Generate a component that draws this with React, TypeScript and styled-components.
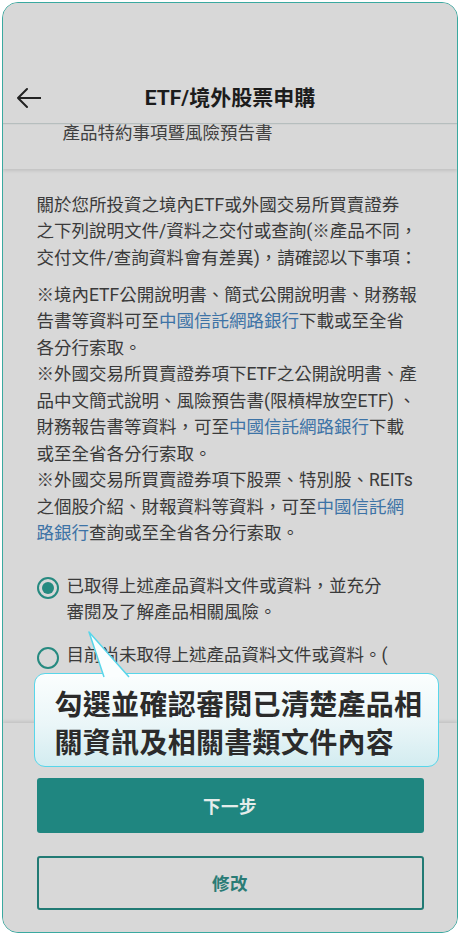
import React from 'react';
import styled, { createGlobalStyle } from 'styled-components';

const GlobalStyle = createGlobalStyle`
  html, body {
    margin: 0;
    padding: 0;
    background: #ffffff;
  }
  body {
    font-family: Roboto, "Noto Sans CJK TC", "Noto Sans", sans-serif;
  }
`;

const Page = styled.div`
  padding: 2px;
  width: 460px;
  box-sizing: border-box;
`;

const Frame = styled.div`
  position: relative;
  width: 456px;
  height: 931px;
  box-sizing: border-box;
  border: 1.5px solid #3aa9a0;
  border-radius: 16px;
  background: #d8d8d8;
  overflow: hidden;
  display: flex;
  flex-direction: column;
`;

const Header = styled.header`
  position: relative;
  z-index: 2;
  height: 120px;
  box-sizing: border-box;
  padding-top: 70px;
  background: #d8d8d8;
  box-shadow: 0 1px 1px rgba(80, 110, 110, 0.25);
`;

const TitleBar = styled.div`
  position: relative;
  height: 50px;
  display: flex;
  align-items: center;
  justify-content: center;
`;

const BackButton = styled.button`
  position: absolute;
  left: 10px;
  top: 50%;
  transform: translateY(-50%);
  border: 0;
  padding: 0;
  background: none;
  display: flex;
`;

const Title = styled.h1`
  margin: 0;
  font-size: 21px;
  font-weight: 700;
  color: #1c1c1c;
  line-height: 28px;
`;

const SubBar = styled.div`
  position: relative;
  z-index: 1;
  height: 45.5px;
  box-sizing: border-box;
  padding-left: 59.5px;
  font-size: 17.5px;
  line-height: 20px;
  color: #404040;
  background: #d8d8d8;
  box-shadow: 0 2px 3px rgba(0, 0, 0, 0.1);
`;

const Content = styled.main`
  flex: 1;
  overflow: hidden;
  padding: 23px 0 0 33.5px;
  color: #3a3a3a;
  font-size: 17.5px;
  line-height: 26.5px;
  white-space: nowrap;
`;

const Paragraph = styled.p<{ $gap?: number }>`
  margin: 0 0 ${(p) => p.$gap ?? 0}px;
`;

const Link = styled.span`
  color: #3d73a6;
`;

const Options = styled.div`
  display: flex;
  flex-direction: column;
  gap: 16.5px;
`;

const Option = styled.label`
  display: flex;
  align-items: flex-start;
  gap: 8px;
`;

const Radio = styled.span<{ $checked?: boolean }>`
  flex: none;
  width: 22px;
  height: 22px;
  margin-top: 4.5px;
  box-sizing: border-box;
  border: 2px solid #268a80;
  border-radius: 50%;
  display: flex;
  align-items: center;
  justify-content: center;

  &::after {
    content: '';
    width: 12px;
    height: 12px;
    border-radius: 50%;
    background: ${(p) => (p.$checked ? '#268a80' : 'transparent')};
  }
`;

const BottomPanel = styled.footer`
  position: relative;
  z-index: 1;
  height: 209.5px;
  box-sizing: border-box;
  padding: 55px 33.5px 0;
  display: flex;
  flex-direction: column;
  gap: 23px;
  background: #d8d8d8;
  box-shadow: 0 -2px 3px rgba(0, 0, 0, 0.09);
`;

const Button = styled.button<{ $outline?: boolean }>`
  height: ${(p) => (p.$outline ? 54 : 55)}px;
  width: 100%;
  box-sizing: border-box;
  border-radius: 3px;
  border: ${(p) => (p.$outline ? '2px solid #217a74' : '0')};
  background: ${(p) => (p.$outline ? 'transparent' : '#1f8680')};
  color: ${(p) => (p.$outline ? '#2a7c76' : '#e4ecea')};
  font-family: inherit;
  font-size: 17.5px;
  font-weight: 700;
  letter-spacing: 0.5px;
`;

const Callout = styled.div`
  position: absolute;
  z-index: 5;
  left: 30.5px;
  top: 669.5px;
  width: 405px;
  height: 94px;
  box-sizing: border-box;
  padding: 10px 0 0 20px;
  border: 1.5px solid #58d6ea;
  border-radius: 11px;
  background: linear-gradient(180deg, #fbfefe 0%, #eaf6f8 55%, #d3ecf0 100%);
  color: #2b2b2b;
  font-family: "Noto Sans CJK TC", sans-serif;
  font-size: 28px;
  font-weight: 700;
  line-height: 38px;
  letter-spacing: 0.3px;
  white-space: nowrap;
`;

const Pointer = styled.svg`
  position: absolute;
  left: 50px;
  top: -43px;
  overflow: visible;
`;

const ArrowLeft = () => (
  <svg width="28" height="24" viewBox="0 0 28 24" fill="none">
    <path d="M5 12H28M5 12l9-9M5 12l9 9" stroke="#222" strokeWidth="2" strokeLinecap="round" strokeLinejoin="round" />
  </svg>
);

const BANK = '中國信託網路銀行';

export default function App() {
  return (
    <Page>
      <GlobalStyle />
      <Frame>
        <Header>
          <TitleBar>
            <BackButton aria-label="返回">
              <ArrowLeft />
            </BackButton>
            <Title>ETF/境外股票申購</Title>
          </TitleBar>
        </Header>
        <SubBar>產品特約事項暨風險預告書</SubBar>

        <Content>
          <Paragraph $gap={10.5}>
            關於您所投資之境內ETF或外國交易所買賣證券
            <br />
            之下列說明文件/資料之交付或查詢(※產品不同，
            <br />
            交付文件/查詢資料會有差異)，請確認以下事項：
          </Paragraph>
          <Paragraph $gap={26}>
            ※境內ETF公開說明書、簡式公開說明書、財務報
            <br />
            告書等資料可至<Link>{BANK}</Link>下載或至全省
            <br />
            各分行索取。
            <br />
            ※外國交易所買賣證券項下ETF之公開說明書、產
            <br />
            品中文簡式說明、風險預告書(限槓桿放空ETF) 、
            <br />
            財務報告書等資料，可至<Link>{BANK}</Link>下載
            <br />
            或至全省各分行索取。
            <br />
            ※外國交易所買賣證券項下股票、特別股、REITs
            <br />
            之個股介紹、財報資料等資料，可至<Link>中國信託網</Link>
            <br />
            <Link>路銀行</Link>查詢或至全省各分行索取。
          </Paragraph>

          <Options>
            <Option>
              <Radio $checked />
              <span>
                已取得上述產品資料文件或資料，並充分
                <br />
                審閱及了解產品相關風險。
              </span>
            </Option>
            <Option>
              <Radio />
              <span>
                目前尚未取得上述產品資料文件或資料。(
                <br />
                如需取得請洽全省各分行)
              </span>
            </Option>
          </Options>
        </Content>

        <BottomPanel>
          <Button>下一步</Button>
          <Button $outline>修改</Button>
        </BottomPanel>

        <Callout>
          <Pointer width="46" height="46" viewBox="0 0 46 46">
            <polygon points="4,1 19,46 44,46" fill="#fbfefe" />
            <polyline points="19,46 4,1 44,46" fill="none" stroke="#58d6ea" strokeWidth="1.5" strokeLinejoin="round" />
          </Pointer>
          勾選並確認審閱已清楚產品相
          <br />
          關資訊及相關書類文件內容
        </Callout>
      </Frame>
    </Page>
  );
}
